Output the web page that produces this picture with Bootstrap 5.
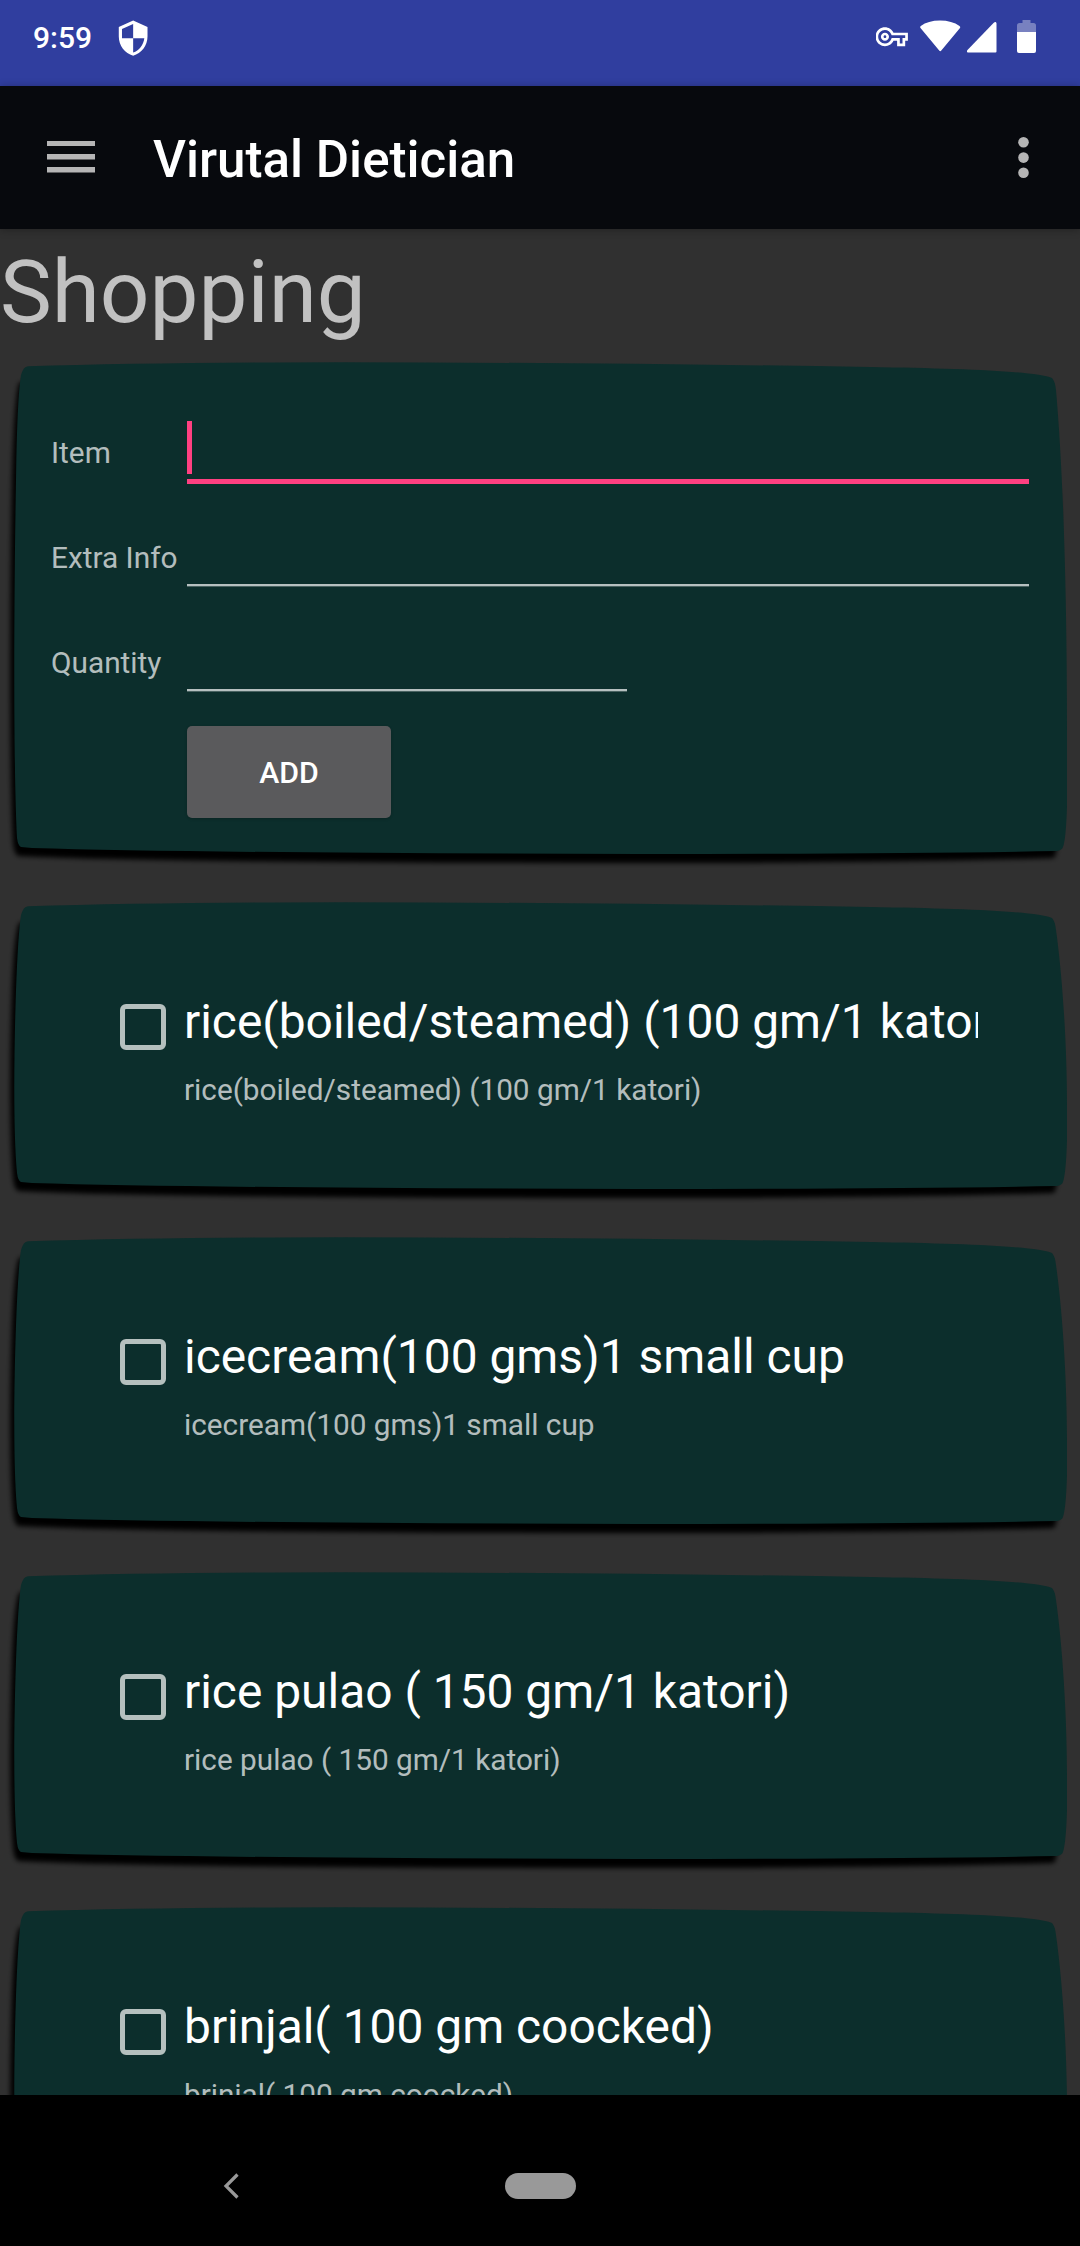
<!DOCTYPE html>
<html lang="en">
<head>
<meta charset="utf-8">
<meta name="viewport" content="width=device-width, initial-scale=1">
<title>Virutal Dietician</title>
<link href="https://cdn.jsdelivr.net/npm/bootstrap@5.3.0/dist/css/bootstrap.min.css" rel="stylesheet">
<style>
  body { font-family: Roboto, sans-serif; background: #303030; color: #fff; }
  .phone { width: 1080px; height: 2246px; }
  .status-strip { height: 86px; background: #303e9f; padding: 0 43px 10px 33px; }
  .clock { font-size: 30px; font-weight: 500; line-height: 36px; width: 81px; }
  .app-strip { height: 143px; background: #07090d; padding: 0 51px 0 47px; box-shadow: 0 1px 8px rgba(0,0,0,.3); z-index: 1; }
  .app-title { font-size: 51.1px; font-weight: 500; line-height: 60px; margin-left: 58px; padding-top: 5px; }
  .screen { height: 1866px; }
  .page-title { font-size: 87.2px; line-height: 102px; height: 121px; padding-top: 12px; color: #c1c1c1; font-weight: 400; flex: none; }
  .panel { display: grid; width: 1080px; flex: none; }
  .panel > * { grid-area: 1 / 1; }
  .panel-form { height: 540px; }
  .panel-item { height: 335px; }
  .soft { color: rgba(255,255,255,.7); }
  .entry { padding: 71px 51px 0 51px; }
  .entry-line { height: 105px; }
  .entry-label { width: 136px; font-size: 29.8px; line-height: 36px; padding-top: 14px; }
  .field { height: 60px; border: 0; border-bottom: 2px solid rgba(255,255,255,.7); box-shadow: 0 1px 0 rgba(255,255,255,.25); background: transparent; width: 842px; }
  .field-active { height: 63px; border-bottom: 5px solid #ff4081; box-shadow: none; }
  .field-short { width: 440px; }
  .caret { width: 5px; height: 53px; background: #ff4081; }
  .add-btn { width: 204px; height: 92px; margin-left: 136px; margin-top: -10px; background: #5a5a5c; border: 0; border-radius: 5px; color: #fff; font-size: 30.3px; font-weight: 500; line-height: 36px; padding: 2px 0 0; box-shadow: 0 1px 3px rgba(0,0,0,.2); }
  .item-row { padding: 103px 102px 0 120px; }
  .tick { width: 46px; height: 46px; border: 5px solid #b5c0be; border-radius: 6px; margin-top: 11px; background: transparent; flex: none; }
  .item-text { width: 794px; margin-left: 18px; }
  .item-name { font-size: 47.9px; line-height: 58px; height: 79px; white-space: nowrap; }
  .item-note { font-size: 29.75px; line-height: 36px; white-space: nowrap; }
  .nav-strip { height: 151px; background: #000; padding: 0 0 0 223px; }
  .home-pill { width: 71px; height: 26px; border-radius: 13px; background: #999; margin-left: 266px; }
  .nav-keys { padding-top: 77.5px; }
</style>
</head>
<body>
<svg width="0" height="0" class="position-absolute" aria-hidden="true">
  <defs>
    <filter id="blur" x="-5%" y="-10%" width="110%" height="120%"><feGaussianBlur stdDeviation="2.4"/></filter>
    <path id="slab-tall" d="M28 16.3Q150 12.5 340 12.3Q600 12.5 870 17C960 18.5 1035 21 1052 28Q1055 31 1056 40C1063 120 1067 240 1067 380V456Q1066 489 1063 497Q1062 500 1057 501Q900 504 640 504Q200 503 32 498L21 497Q18 496 17 488C13 410 14 240 16 130Q17 50 21 25Q23 17 28 16.3Z"/>
    <path id="slab" d="M28 16.3Q150 12.5 340 12.3Q600 12.5 870 17C960 18.5 1035 21 1052 28Q1055 31 1056 40C1063 90 1067 160 1067 215V250Q1066 283 1063 292Q1062 295 1057 296Q900 299 640 299Q200 298 32 293L21 292Q18 291 17 283C13 240 14 160 16 100Q18 45 21 25Q23 17 28 16.3Z"/>
    <path id="slab-shade" d="M34 30L1040 50L1059 150V250Q1059 296 1054 303Q900 308 640 308Q200 308 40 302L18 301Q14 299 13 288C9 240 10 160 12 100Q14 45 19 33Q26 30 34 30Z"/>
    <path id="slab-shade-tall" d="M34 30L1040 50L1059 150V456Q1059 501 1054 508Q900 513 640 513Q200 513 40 507L18 506Q14 504 13 493C9 420 10 240 12 130Q14 50 19 33Q26 30 34 30Z"/>
  </defs>
</svg>

<div class="phone d-flex flex-column overflow-hidden">
  <header class="status-strip d-flex align-items-center">
    <div class="clock">9:59</div>
    <svg width="38.3" height="38.3" viewBox="0 0 24 24" fill="#fff"><path d="M12 1L3 5v6c0 5.55 3.84 10.74 9 12 5.16-1.26 9-6.45 9-12V5l-9-4zm0 10.99h7c-.53 4.12-3.28 7.79-7 8.94V12H5V6.3l7-3.11v8.8z"/></svg>
    <svg class="ms-auto" width="33" height="38" viewBox="0 0 33 38" fill="#fff"><path transform="translate(-.5 1.500) scale(1.35)" d="M22 19h-6v-4h-2.68c-1.14 2.42-3.6 4-6.32 4-3.86 0-7-3.14-7-7s3.14-7 7-7c2.72 0 5.17 1.58 6.32 4H24v6h-2v4zm-4-2h2v-4h2v-2H11.94l-.23-.67C11.01 8.34 9.11 7 7 7c-2.76 0-5 2.24-5 5s2.24 5 5 5c2.11 0 4.01-1.34 4.71-3.33l.23-.67H18v4zM7 15c-1.65 0-3-1.35-3-3s1.35-3 3-3 3 1.35 3 3-1.35 3-3 3zm0-4c-.55 0-1 .45-1 1s.45 1 1 1 1-.45 1-1-.45-1-1-1z"/></svg>
    <svg class="ms-2" width="50" height="38" viewBox="0 0 50 38" fill="#fff"><path d="M3.500 9Q2.500 8 3.800 7Q11 1.500 23 1.500T42.500 7Q43.800 8 43 9L24.300 31.500Q23.200 33 22.200 31.500Z"/></svg>
    <svg width="40" height="38" viewBox="0 0 40 38" fill="#fff"><path d="M26.500 4Q29 2 29.500 4.500V32.500Q29.500 33.500 28.500 33.500H.8Q-1 33 .5 31Z"/></svg>
    <svg class="ms-2" width="22" height="38" viewBox="0 0 22 38" fill="#fff"><path opacity=".35" d="M2 13V6.500Q2 4 4.500 4H7.500V1H15.500V4H18.500Q21 4 21 6.500V13Z"/><path d="M2 13H21V32Q21 34 19 34H4Q2 34 2 32Z"/></svg>
  </header>

  <nav class="app-strip d-flex align-items-center position-relative">
    <svg width="48" height="35" viewBox="0 0 48 35" fill="#b5b5b5"><path d="M0 1h48v5H0zM0 14h48v5.500H0zM0 27h48v5.500H0z"/></svg>
    <div class="app-title">Virutal Dietician</div>
    <svg class="ms-auto" width="11" height="43" viewBox="0 0 11 43" fill="#b5b5b5"><circle cx="5.500" cy="6.300" r="5.300"/><circle cx="5.500" cy="21.600" r="5.300"/><circle cx="5.500" cy="36.800" r="5.300"/></svg>
  </nav>

  <main class="screen d-flex flex-column overflow-hidden">
    <h1 class="page-title m-0">Shopping</h1>

    <section class="panel panel-form">
      <svg width="1080" height="540"><use href="#slab-shade-tall" filter="url(#blur)"/><use href="#slab-tall" fill="#0c2e2c"/></svg>
      <form class="entry">
        <div class="entry-line d-flex">
          <label class="entry-label soft">Item</label>
          <div class="field field-active"><div class="caret"></div></div>
        </div>
        <div class="entry-line d-flex">
          <label class="entry-label soft">Extra Info</label>
          <div class="field"></div>
        </div>
        <div class="entry-line d-flex">
          <label class="entry-label soft">Quantity</label>
          <div class="field field-short"></div>
        </div>
        <button type="button" class="btn add-btn">ADD</button>
      </form>
    </section>

    <section class="panel panel-item">
      <svg width="1080" height="335"><use href="#slab-shade" filter="url(#blur)"/><use href="#slab" fill="#0c2e2c"/></svg>
      <div class="item-row d-flex">
        <div class="tick"></div>
        <div class="item-text overflow-hidden">
          <div class="item-name">rice(boiled/steamed) (100 gm/1 katori)</div>
          <div class="item-note soft">rice(boiled/steamed) (100 gm/1 katori)</div>
        </div>
      </div>
    </section>

    <section class="panel panel-item">
      <svg width="1080" height="335"><use href="#slab-shade" filter="url(#blur)"/><use href="#slab" fill="#0c2e2c"/></svg>
      <div class="item-row d-flex">
        <div class="tick"></div>
        <div class="item-text overflow-hidden">
          <div class="item-name">icecream(100 gms)1 small cup</div>
          <div class="item-note soft">icecream(100 gms)1 small cup</div>
        </div>
      </div>
    </section>

    <section class="panel panel-item">
      <svg width="1080" height="335"><use href="#slab-shade" filter="url(#blur)"/><use href="#slab" fill="#0c2e2c"/></svg>
      <div class="item-row d-flex">
        <div class="tick"></div>
        <div class="item-text overflow-hidden">
          <div class="item-name">rice pulao ( 150 gm/1 katori)</div>
          <div class="item-note soft">rice pulao ( 150 gm/1 katori)</div>
        </div>
      </div>
    </section>

    <section class="panel panel-item">
      <svg width="1080" height="335"><use href="#slab-shade" filter="url(#blur)"/><use href="#slab" fill="#0c2e2c"/></svg>
      <div class="item-row d-flex">
        <div class="tick"></div>
        <div class="item-text overflow-hidden">
          <div class="item-name">brinjal( 100 gm coocked)</div>
          <div class="item-note soft">brinjal( 100 gm coocked)</div>
        </div>
      </div>
    </section>
  </main>

  <footer class="nav-strip">
    <div class="nav-keys d-flex align-items-center">
      <svg width="16" height="26" viewBox="0 0 16 26" fill="none" stroke="#999" stroke-width="3.200"><path d="M14.500 1.500L3 13L14.500 24.500"/></svg>
      <div class="home-pill"></div>
    </div>
  </footer>
</div>
<script src="https://cdn.jsdelivr.net/npm/bootstrap@5.3.0/dist/js/bootstrap.bundle.min.js"></script>
</body>
</html>
